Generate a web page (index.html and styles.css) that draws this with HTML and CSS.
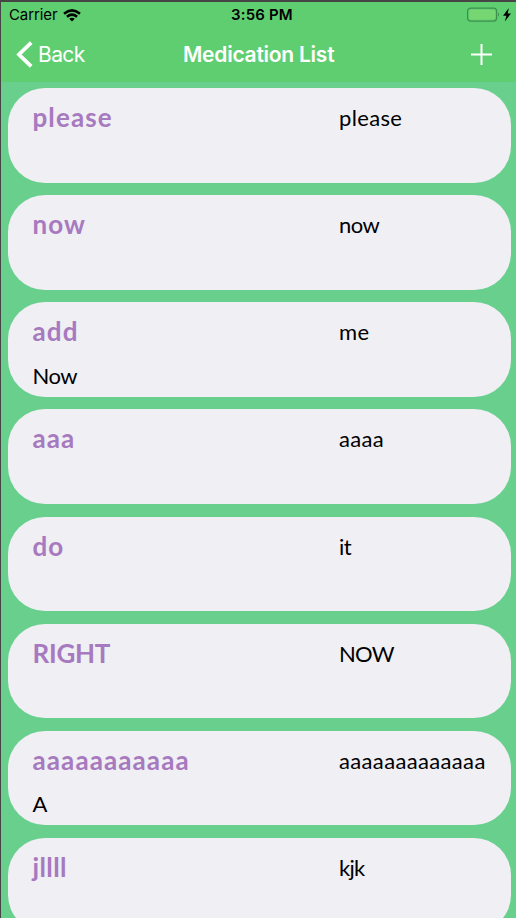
FILE: index.html
```html
<!DOCTYPE html>
<html lang="en">
<head>
<meta charset="utf-8">
<title>Medication List</title>
<link rel="stylesheet" href="styles.css">
</head>
<body>
<div class="screen">
  <header class="header">
    <div class="status">
      <div class="carrier"><span>Carrier</span>
        <svg class="wifi" width="18" height="13" viewBox="0 0 18 13" fill="none" stroke="#000" stroke-width="2.5"><path d="M1 4.7Q9-2 17 4.7M3.9 7.8Q9 3.5 14.1 7.8"/><path d="M6.2 9.8Q9 7.6 11.8 9.8L9 12.6Z" fill="#000" stroke="none"/></svg>
      </div>
      <div class="time">3:56 PM</div>
      <div class="power">
        <svg width="45" height="16" viewBox="0 0 45 16"><rect x=".6" y="1.1" width="29" height="13" rx="3" fill="none" stroke="#3d8f4e" stroke-width="1.2"/><rect x="2.2" y="2.7" width="25.8" height="9.8" rx="1.5" fill="#76d672"/><path d="M31 5.5Q33 7.5 31 9.8Z" fill="#3d8f4e"/><path d="M41.8 1L36 8.7H39.4L37.8 14.4L44 6.6H40.7Z" fill="#000"/></svg>
      </div>
    </div>
    <nav class="nav">
      <div class="back">
        <svg width="17" height="27" viewBox="0 0 17 27" fill="none" stroke="#fff" stroke-width="3.8"><path d="M15.2 1.6L3 13.5L15.2 25.4"/></svg>
        <span>Back</span>
      </div>
      <h1 class="heading">Medication List</h1>
      <svg class="add" width="21" height="21" viewBox="0 0 21 21" fill="none" stroke="#fff" stroke-width="2"><path d="M0 10.5H21M10.5 0V21"/></svg>
    </nav>
  </header>
  <main class="list">
    <article class="card"><h2 class="name">please</h2><p class="dose">please</p></article>
    <article class="card"><h2 class="name">now</h2><p class="dose tight">now</p></article>
    <article class="card"><h2 class="name">add</h2><p class="dose">me</p><p class="note">Now</p></article>
    <article class="card"><h2 class="name">aaa</h2><p class="dose">aaaa</p></article>
    <article class="card"><h2 class="name">do</h2><p class="dose tight">it</p></article>
    <article class="card"><h2 class="name caps">RIGHT</h2><p class="dose caps">NOW</p></article>
    <article class="card"><h2 class="name">aaaaaaaaaaa</h2><p class="dose">aaaaaaaaaaaaa</p><p class="note">A</p></article>
    <article class="card"><h2 class="name narrow">jllll</h2><p class="dose narrow">kjk</p></article>
  </main>
</div>
</body>
</html>
```
FILE: styles.css
```css
* { box-sizing: border-box; }
body { margin: 0; background: #68cf8c; overflow: hidden; }
.screen {
  height: 918px;
  overflow: hidden;
  border-top: 2px solid #454545;
  border-left: 1px solid #454545;
  font-family: Lato, "Liberation Sans", sans-serif;
}
.header {
  height: 80px;
  background: #5fce71;
  font-family: Inter, "Liberation Sans", sans-serif;
}
.status {
  height: 26px;
  padding: 0 4px 0 8px;
  display: grid;
  grid-template-columns: 222px 1fr 45px;
  align-items: center;
  font-size: 15px;
  line-height: 26px;
  color: #000;
}
.carrier { display: flex; align-items: center; gap: 6px; letter-spacing: -.1px; }
.time { font-weight: 600; letter-spacing: .15px; }
.power { display: flex; justify-content: flex-end; }
.nav {
  height: 52px;
  padding: 0 24px 0 15px;
  display: grid;
  grid-template-columns: 167px 1fr 21px;
  align-items: center;
  color: #fff;
}
.back { display: flex; align-items: center; gap: 5px; font-size: 21px; letter-spacing: -.6px; }
.heading { margin: 0; font-size: 21px; font-weight: 600; letter-spacing: -.25px; }
.add { justify-self: end; }
.list {
  padding: 6.2px 5.5px 0 6.5px;
  display: flex;
  flex-direction: column;
  gap: 12.6px;
}
.card {
  flex: none;
  height: 94.5px;
  padding: 12px 0 0 25px;
  border-radius: 37px;
  background: #efeff4;
  display: grid;
  grid-template-columns: 306.5px 1fr;
  grid-template-rows: 34px 34px;
  row-gap: 10.5px;
}
.name, .dose, .note { margin: 0; line-height: 34px; white-space: nowrap; }
.name { font-size: 26px; font-weight: 700; color: #a779bf; letter-spacing: 1.1px; }
.name.caps { letter-spacing: -.25px; }
.name.narrow { letter-spacing: .4px; }
.dose, .note { font-size: 22px; font-weight: 400; color: #000; letter-spacing: .35px; }
.dose { padding-top: 1px; }
.dose.tight { letter-spacing: -.5px; }
.dose.caps, .dose.narrow { letter-spacing: -.7px; }
.note { grid-column: 1; letter-spacing: -.5px; }
```
